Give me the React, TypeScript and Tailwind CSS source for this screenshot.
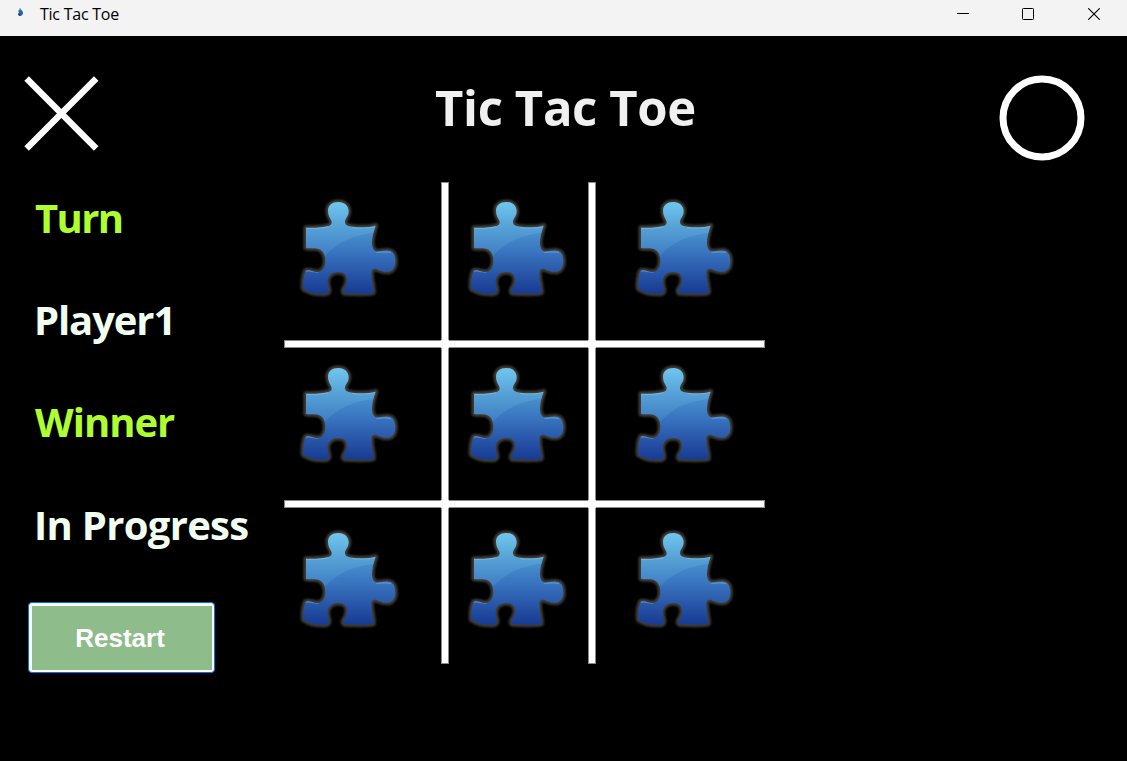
const PIECE =
  "M51 113C75 114 100 113 118 108C129 105 130 97 126 90C122 81 117 75 117 62C117 45 130 36 148 36C166 36 179 47 179 64C179 80 168 85 168 96C168 108 180 108 190 110C215 113 240 112 260 107C254 125 248 145 249 162C250 178 258 186 268 184C280 183 290 181 300 182C314 184 319 198 319 214C319 232 312 243 298 245C280 247 270 239 262 237C252 234 247 240 247 250C247 275 255 295 253 308C252 312 200 311 168 310C158 306 164 296 170 287C178 270 176 246 148 246C118 246 112 270 118 290C122 303 120 311 108 311C85 312 60 308 43 296C41 280 44 255 50 242C60 236 70 246 85 246C102 245 109 230 109 212C109 190 98 176 78 175C65 174 55 176 51 173Z";

function PuzzlePiece({ className }: { className: string }) {
  return (
    <svg viewBox="30 24 300 300" className={`size-[100px] ${className}`}>
      <defs>
        <linearGradient id="body" x1="0" y1="36" x2="0" y2="311" gradientUnits="userSpaceOnUse">
          <stop offset="0" stopColor="#6cc4ef" />
          <stop offset="0.27" stopColor="#4c97d0" />
          <stop offset="0.55" stopColor="#3874bf" />
          <stop offset="0.8" stopColor="#2753a6" />
          <stop offset="1" stopColor="#163b92" />
        </linearGradient>
        <linearGradient id="gloss" x1="0" y1="110" x2="0" y2="205" gradientUnits="userSpaceOnUse">
          <stop offset="0" stopColor="#7fd0f0" stopOpacity="0.2" />
          <stop offset="1" stopColor="#7fd0f0" stopOpacity="0.12" />
        </linearGradient>
        <clipPath id="shape">
          <path d={PIECE} />
        </clipPath>
        <filter id="soft" x="-10%" y="-10%" width="120%" height="120%">
          <feGaussianBlur stdDeviation="2.6" />
        </filter>
      </defs>
      <path d={PIECE} fill="none" stroke="#403d36" strokeWidth="15" strokeLinejoin="round" filter="url(#soft)" />
      <path d={PIECE} fill="url(#body)" />
      <g clipPath="url(#shape)">
        <path d="M40 20H270V127C200 132 145 155 108 198L40 220Z" fill="url(#gloss)" />
        <path
          d="M51 115C75 116 100 115 118 110M190 112C215 115 240 114 258 109M262 187C280 186 290 184 306 187M50 244C60 238 70 248 88 246"
          fill="none"
          stroke="#a5d2f0"
          strokeOpacity="0.35"
          strokeWidth="4"
        />
      </g>
    </svg>
  );
}

const COLUMNS = [
  { cell: "col-start-1", inset: "ml-[15.4px]" },
  { cell: "col-start-3", inset: "ml-[18.2px]" },
  { cell: "col-start-5", inset: "ml-[38.1px]" },
];
const ROWS = [
  { cell: "row-start-1", inset: "mt-[16.2px]" },
  { cell: "row-start-3", inset: "mt-[16.3px]" },
  { cell: "row-start-5", inset: "mt-[20.6px]" },
];

function Board() {
  return (
    <div className="grid grid-cols-[157px_8px_139px_8px_169px] grid-rows-[158px_8px_152px_8px_156px]">
      <div className="col-start-2 row-span-full border border-[#8a8a8a] bg-white" />
      <div className="col-start-4 row-span-full border border-[#8a8a8a] bg-white" />
      <div className="col-span-full row-start-2 border border-[#8a8a8a] bg-white" />
      <div className="col-span-full row-start-4 border border-[#8a8a8a] bg-white" />
      <div className="col-start-2 row-start-2 bg-white" />
      <div className="col-start-4 row-start-2 bg-white" />
      <div className="col-start-2 row-start-4 bg-white" />
      <div className="col-start-4 row-start-4 bg-white" />
      {ROWS.map((r) =>
        COLUMNS.map((c) => (
          <button key={r.cell + c.cell} aria-label="Cell" className={`flex items-start ${r.cell} ${c.cell}`}>
            <PuzzlePiece className={`${r.inset} ${c.inset}`} />
          </button>
        )),
      )}
    </div>
  );
}

function TitleBar() {
  return (
    <div className="flex h-9 items-start bg-[#f3f3f3] text-black">
      <svg viewBox="0 0 8 10" className="mt-[7px] ml-4 h-[10px] w-2">
        <path d="M4 1L5.5 3L7 5V7L5 9H3L2 7L3 5L2 4L3.3 3Z" fill="#2d65ad" />
        <path d="M4 1L5 3H3.2Z" fill="#55b4df" />
        <path d="M2.5 6L4 7.5V9L2.5 8Z" fill="#2b3340" />
      </svg>
      <span className="ml-4 text-[16px] leading-7 tracking-[-0.25px] whitespace-nowrap">Tic Tac Toe</span>
      <div className="mr-[27px] ml-auto flex h-7 items-center">
        <svg viewBox="0 0 12 12" className="mr-[53px] h-3 w-3" stroke="#000">
          <path d="M0 5.5H12" />
        </svg>
        <svg viewBox="0 0 12 12" className="mr-[54px] h-3 w-3" fill="none" stroke="#000">
          <rect x="0.5" y="0.5" width="11" height="11" rx="0.8" />
        </svg>
        <svg viewBox="0 0 12 12" className="h-3 w-3" stroke="#000" strokeWidth="1.1">
          <path d="M0.3 0.3L11.7 11.7M11.7 0.3L0.3 11.7" />
        </svg>
      </div>
    </div>
  );
}

export default function App() {
  return (
    <div className="flex h-[761px] w-[1127px] flex-col overflow-hidden bg-black font-['Open_Sans','Noto_Sans',sans-serif]">
      <TitleBar />
      <header className="flex h-[146px] items-start">
        <svg viewBox="0 0 76 76" className="mt-[39px] ml-6 size-[76px]" stroke="#fff" strokeWidth="6.4">
          <path d="M2.6 3.6L72.2 73.4M72.2 3.6L2.6 73.4" />
        </svg>
        <h1 className="mt-9 ml-[335px] text-[49px] leading-[70px] font-bold tracking-[-0.35px] whitespace-nowrap text-[#f0f0f0]">
          Tic Tac Toe
        </h1>
        <svg viewBox="0 0 86 86" className="mt-[38.6px] mr-[41.8px] ml-auto size-[86px]" fill="none" stroke="#fff" strokeWidth="7">
          <circle cx="43" cy="43" r="39" />
        </svg>
      </header>
      <main className="flex">
        <aside className="flex w-[284px] shrink-0 flex-col items-start text-[40px] leading-[60px] font-bold whitespace-nowrap">
          <p className="mt-[6px] ml-[35px] tracking-[-1.6px] text-[#adff2f]">Turn</p>
          <p className="mt-[42px] ml-[34px] tracking-[-1.1px] text-[#f0fff0]">Player1</p>
          <p className="mt-[42px] ml-[35px] tracking-[-1px] text-[#adff2f]">Winner</p>
          <p className="mt-[43px] ml-[34px] tracking-[-0.7px] text-[#f0fff0]">In Progress</p>
          <button className="mt-[47px] ml-7 flex h-[71px] w-[187px] items-center justify-center rounded-[4px] border border-[#0078d7] bg-white p-[2.5px]">
            <span className="flex h-full w-full items-center justify-center bg-[#8fbc8b] pr-[3px] font-['Liberation_Sans',Arial,sans-serif] text-[26px] text-white">
              Restart
            </span>
          </button>
        </aside>
        <Board />
      </main>
    </div>
  );
}
